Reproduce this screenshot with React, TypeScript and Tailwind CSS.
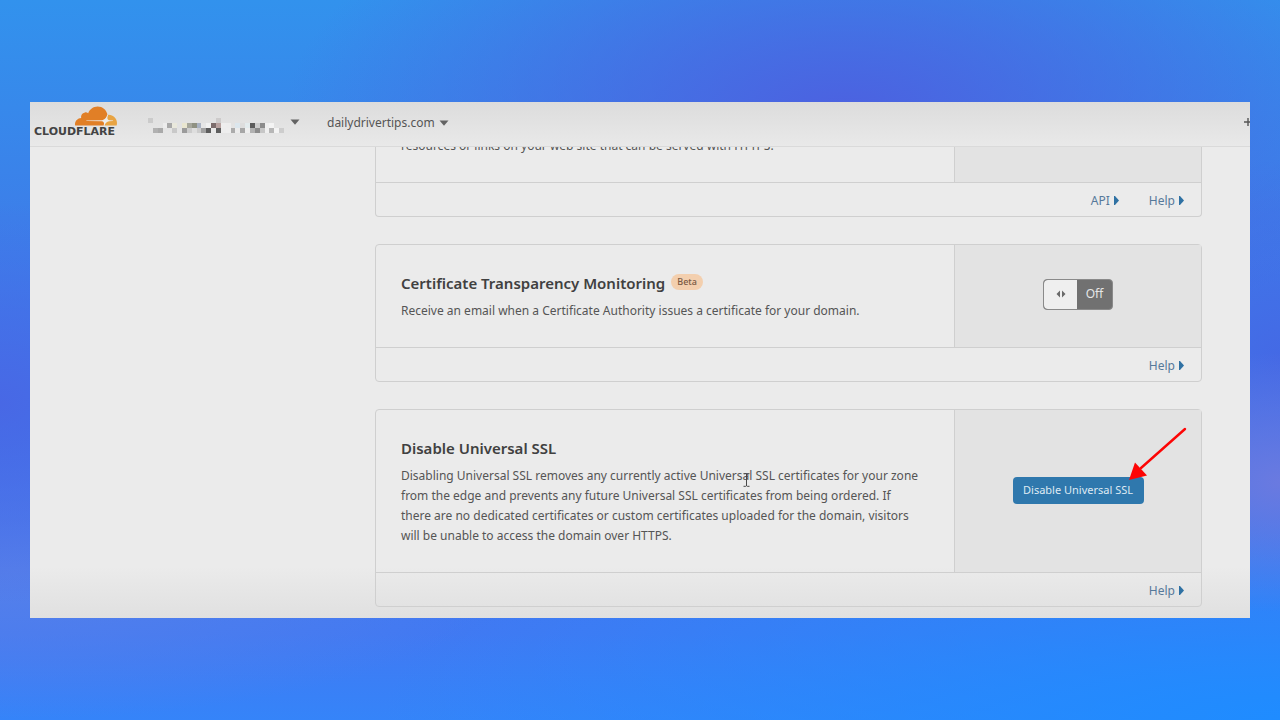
import type { ReactNode } from "react";

const MOSAIC: [number, number, string][] = [
  [0, 0, "#cbcbcb"], [14, 0, "#cdcbcb"],
  [3, 1, "#ececec"], [4, 1, "#a8a8a8"], [5, 1, "#e9e8dc"], [6, 1, "#e2e2e2"], [7, 1, "#e9e6d0"],
  [8, 1, "#a6a79c"], [9, 1, "#8f9182"], [10, 1, "#a9b2c2"], [11, 1, "#e6e6e6"], [12, 1, "#f1f1f1"],
  [13, 1, "#7c6d6d"], [14, 1, "#b9a3a1"], [15, 1, "#eeeeee"], [16, 1, "#ededed"], [18, 1, "#dbe6ed"],
  [19, 1, "#dddddd"], [20, 1, "#e3ebed"], [21, 1, "#5b5b5b"], [22, 1, "#cccccc"], [23, 1, "#8b8b8b"],
  [24, 1, "#efefef"], [25, 1, "#f4f4f4"],
  [1, 2, "#b1b1b1"], [2, 2, "#a9a9a9"], [5, 2, "#c9c9c9"], [7, 2, "#9b9b9b"], [8, 2, "#cccccc"],
  [9, 2, "#dedede"], [10, 2, "#cccccc"], [11, 2, "#a1a1a1"], [12, 2, "#5c5c5c"], [13, 2, "#e9e9e9"],
  [14, 2, "#5e5e5e"], [15, 2, "#ededed"], [16, 2, "#eeeeee"], [17, 2, "#ababab"], [18, 2, "#ebebeb"],
  [19, 2, "#a6a6a6"], [20, 2, "#eeeeee"], [21, 2, "#b1b1b1"], [22, 2, "#8b8b8b"], [23, 2, "#c6c6c6"],
  [24, 2, "#efefef"], [25, 2, "#b6b6b6"], [26, 2, "#f3f3f3"], [27, 2, "#cdcdcd"],
];

function Logo() {
  return (
    <a href="#home" aria-label="Cloudflare" className="flex w-[85px] flex-col items-end">
      <svg viewBox="0 6.5 24 11" className="h-5 w-[42px]" aria-hidden="true">
        <path
          fill="#ededed"
          d="M3 13h14.4l1.4 -1.8l3.4 1.6l1.2 2.6l-2 1.8h-18z"
        />
        <path
          fill="#e17f26"
          d="M16.5088 16.8447c.1475-.5068.0908-.9707-.1553-1.3154-.2246-.3164-.6045-.499-1.0615-.5205l-8.6592-.1123a.1559.1559 0 0 1-.1333-.0713c-.0283-.042-.0351-.0986-.021-.1553.0278-.084.1123-.1484.2036-.1562l8.7359-.1123c1.0351-.0489 2.1601-.8868 2.5537-1.9136l.499-1.3013c.0215-.0561.0293-.1128.0147-.168-.5625-2.5463-2.835-4.4453-5.5499-4.4453-2.5039 0-4.6284 1.6177-5.3876 3.8614-.4927-.3658-1.1187-.5625-1.794-.499-1.2026.119-2.1665 1.083-2.2861 2.2856-.0283.31-.0069.6128.0635.894C1.5683 13.171 0 14.7754 0 16.752c0 .1748.0142.3515.0352.5273.0141.083.0844.1475.1689.1475h15.9814c.0909 0 .1758-.0645.2032-.1553l.12-.4268z"
        />
        <path
          fill="#e8a443"
          d="M19.2656 11.2813c-.0771 0-.1611 0-.2383.0112-.0566 0-.1054.0415-.127.0976l-.3378 1.1744c-.1475.5068-.0918.9707.1543 1.3164.2256.3164.6055.498 1.0625.5195l1.8437.1133c.0557 0 .1055.0263.1329.0703.0283.043.0351.1074.0214.1562-.0283.084-.1132.1485-.204.1553l-1.921.1123c-1.041.0488-2.1582.8867-2.5527 1.914l-.1406.3585c-.0283.0713.0215.1416.0986.1416h6.5977c.0771 0 .1474-.0489.169-.126.1122-.4082.1757-.837.1757-1.2803 0-2.6025-2.125-4.727-4.7344-4.727z"
        />
      </svg>
      <span className="self-center font-['DejaVu_Sans',sans-serif] text-[11px] leading-3 font-bold text-[#434343]">
        CLOUDFLARE
      </span>
    </a>
  );
}

function Caret() {
  return (
    <svg viewBox="0 0 10 6" className="h-1.5 w-2.5" aria-hidden="true">
      <path d="M0.5 0.5h9L5 5.8z" fill="#636363" />
    </svg>
  );
}

function FooterLink({ label }: { label: string }) {
  return (
    <a href={"#" + label.toLowerCase()} className="flex items-center gap-1 text-xs text-[#56799a]">
      {label}
      <svg viewBox="0 0 5 9" className="h-[9px] w-[5px]" aria-hidden="true">
        <path d="M0 0h1L5 4.5L1 9H0z" fill="#2f71a3" />
      </svg>
    </a>
  );
}

type CardProps = {
  title?: ReactNode;
  text: string;
  control?: ReactNode;
  links: string[];
  clipped?: boolean;
};

function Card({ title, text, control, links, clipped }: CardProps) {
  return (
    <section
      className={
        clipped
          ? "rounded-b border border-t-0 border-[#cfcfcf]"
          : "rounded border border-[#cfcfcf]"
      }
    >
      <div className="flex border-b border-[#cfcfcf]">
        <div className={clipped ? "-mt-[11px] flex-1 px-[25px] pb-[26px]" : "flex-1 px-[25px] py-[26px]"}>
          {title && (
            <h2 className="mb-1.5 flex items-center gap-1.5 text-[15px] leading-6 font-semibold text-[#404040]">
              {title}
            </h2>
          )}
          <p className="max-w-[522px] text-xs leading-5 text-[#555]">{text}</p>
        </div>
        <div className="flex w-[247px] shrink-0 items-center justify-center border-l border-[#cfcfcf] bg-[#e3e3e3]">
          {control}
        </div>
      </div>
      <div className="flex h-[33px] items-center justify-end gap-[30px] pt-0.5 pr-[17px]">
        {links.map((label) => (
          <FooterLink key={label} label={label} />
        ))}
      </div>
    </section>
  );
}

function OffSwitch() {
  return (
    <button
      type="button"
      role="switch"
      aria-checked="false"
      aria-label="Certificate Transparency Monitoring"
      className="mb-1 flex h-[31px] w-[70px] overflow-hidden rounded border border-[#8a8a8a] bg-[#717171] text-xs text-[#e6e6e6]"
    >
      <span className="flex h-full flex-1 items-center justify-center rounded-l bg-[#efefef]">
        <svg viewBox="0 0 10 8" className="h-2 w-2.5" aria-hidden="true">
          <path d="M4 0.5v7L0.5 4zM6 0.5v7L9.5 4z" fill="#6a6a6a" />
        </svg>
      </span>
      <span className="flex h-full w-[35px] items-center justify-center">Off</span>
    </button>
  );
}

function DisableButton() {
  return (
    <div className="relative mb-0.5">
      <button
        type="button"
        className="h-[27px] w-[131px] rounded bg-[#2f78ad] text-[11px] whitespace-nowrap text-[#dfeaf3]"
      >
        Disable Universal SSL
      </button>
      <svg
        viewBox="0 0 58 54"
        className="pointer-events-none absolute right-[-43px] bottom-[23px] h-[54px] w-[58px]"
        aria-hidden="true"
      >
        <path d="M56 2L12 41" stroke="#fd0505" strokeWidth="2.4" strokeLinecap="round" />
        <path d="M0 53L6 35.5L18 48.5z" fill="#fd0505" />
      </svg>
    </div>
  );
}

export default function App() {
  return (
    <div className="flex min-h-screen flex-col justify-center bg-[#3a80f5] bg-[radial-gradient(ellipse_560px_260px_at_66%_16%,#4c61e0_0%,#4c61e000_100%),radial-gradient(ellipse_260px_200px_at_0%_56%,#4868e5_0%,#4868e500_100%),radial-gradient(ellipse_500px_150px_at_1%_79%,#5680ea_0%,#5680ea00_100%),radial-gradient(ellipse_200px_130px_at_100%_67%,#6a7ae0_0%,#6a7ae000_100%),radial-gradient(ellipse_200px_200px_at_100%_50%,#4469e5_0%,#4469e500_100%),radial-gradient(ellipse_900px_260px_at_100%_100%,#1f8cff_0%,#1f8cff00_100%),linear-gradient(180deg,#3292ed_0%,#3c7fe9_30%,#3f78ee_65%,#4179f2_88%,#3584f9_100%)] px-[30px] font-['Noto_Sans',sans-serif]">
      <div className="relative overflow-hidden bg-[linear-gradient(180deg,#ebebeb_0%,#ebebeb_90%,#e0e0e0_100%)]">
        <header className="flex h-[45px] items-center border-b border-[#dadada] bg-linear-to-b from-[#dcdcdc] to-[#e9e9e9] pl-0.5">
          <div className="pb-1">
            <Logo />
          </div>
          <button type="button" aria-label="Account" className="ml-[31px] flex items-center gap-1.5 pb-1">
            <svg viewBox="0 0 28 3" className="mt-1.5 h-[15px] w-[136px]" shapeRendering="crispEdges" aria-hidden="true">
              {MOSAIC.map(([x, y, fill]) => (
                <rect key={x + "-" + y} x={x} y={y} width="1" height="1" fill={fill} />
              ))}
            </svg>
            <Caret />
          </button>
          <button type="button" className="ml-[27px] flex items-center gap-1 pb-[3px] text-xs text-[#555]">
            dailydrivertips.com
            <Caret />
          </button>
          <button type="button" aria-label="Add" className="ml-auto pb-1">
            <svg viewBox="0 0 6 8" className="h-2 w-1.5" aria-hidden="true">
              <path d="M0 4h6M4 0v8" stroke="#555" strokeWidth="1.4" />
            </svg>
          </button>
        </header>

        <main className="overflow-hidden pr-12 pb-[11px] pl-[345px]">
          <div className="flex flex-col gap-[27px]">
            <Card
              clipped
              text="resources or links on your web site that can be served with HTTPS."
              links={["API", "Help"]}
            />
            <Card
              title={
                <>
                  Certificate Transparency Monitoring
                  <span className="mb-0.5 rounded-full bg-[#f3cfae] px-1.5 text-[9px] leading-4 font-medium text-[#7a5a43]">
                    Beta
                  </span>
                </>
              }
              text="Receive an email when a Certificate Authority issues a certificate for your domain."
              control={<OffSwitch />}
              links={["Help"]}
            />
            <Card
              title="Disable Universal SSL"
              text="Disabling Universal SSL removes any currently active Universal SSL certificates for your zone from the edge and prevents any future Universal SSL certificates from being ordered. If there are no dedicated certificates or custom certificates uploaded for the domain, visitors will be unable to access the domain over HTTPS."
              control={<DisableButton />}
              links={["Help"]}
            />
          </div>
        </main>

        <svg
          viewBox="0 0 7 14"
          className="pointer-events-none absolute top-[371px] left-[713px] h-3.5 w-[7px]"
          aria-hidden="true"
        >
          <path d="M0.5 0.7h2.2l0.8 0.6l0.8-0.6h2.2M3.5 1v12M0.5 13.3h2.2l0.8-0.6l0.8 0.6h2.2" fill="none" stroke="#484848" />
        </svg>
      </div>
    </div>
  );
}
